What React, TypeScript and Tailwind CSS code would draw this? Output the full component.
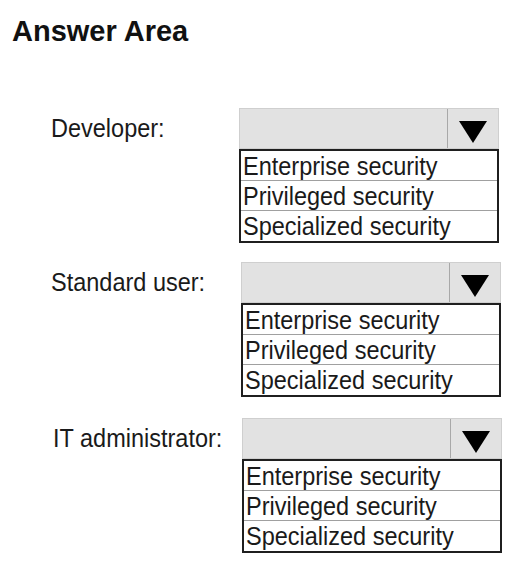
import React from "react";

const OPTIONS = ["Enterprise security", "Privileged security", "Specialized security"];

function Triangle() {
  return (
    <svg width="28" height="22" viewBox="0 0 28 22" className="block">
      <polygon points="0,0 28,0 14,22" fill="#000" />
    </svg>
  );
}

function Group({
  label,
  mt,
  labelPad,
  selectLeft,
}: {
  label: string;
  mt: string;
  labelPad: string;
  selectLeft: string;
}) {
  return (
    <div className={`flex ${mt}`}>
      <div className={`${selectLeft} ${labelPad} shrink-0`}>
        <div className="h-[41px] leading-[41px] text-[23.5px] text-[#1a1a1a] whitespace-nowrap">
          <span className="inline-block scale-y-[1.13]">{label}</span>
        </div>
      </div>
      <div className="w-[260px] shrink-0">
        <div className="h-[41px] flex bg-[#e2e2e2] border border-[#cfcfcf]">
          <div className="flex-1 border-r border-[#a8a8a8]" />
          <div className="w-[50px] flex items-center justify-center pt-[7px]">
            <Triangle />
          </div>
        </div>
        <div className="border-2 border-[#1f1f1f] bg-white">
          {OPTIONS.map((o, i) => (
            <div
              key={o}
              className={`h-[30px] leading-[30px] pl-[2px] text-[23.5px] text-[#1a1a1a] whitespace-nowrap ${
                i < OPTIONS.length - 1 ? "border-b border-[#a0a0a0]" : ""
              }`}
            >
              <span className="inline-block scale-y-[1.13]">{o}</span>
            </div>
          ))}
        </div>
      </div>
    </div>
  );
}

export default function App() {
  return (
    <div
      className="w-[517px] h-[569px] bg-white overflow-hidden"
      style={{ fontFamily: '"Liberation Sans", Arial, sans-serif' }}
    >
      <div className="pt-[17px] pl-[12px] text-[29px] leading-[29px] font-bold text-[#111]">
        Answer Area
      </div>
      <Group label="Developer:" mt="mt-[62px]" labelPad="pl-[51px]" selectLeft="w-[239px]" />
      <Group label="Standard user:" mt="mt-[19px]" labelPad="pl-[51px]" selectLeft="w-[241px]" />
      <Group label="IT administrator:" mt="mt-[21px]" labelPad="pl-[53px]" selectLeft="w-[242px]" />
    </div>
  );
}
